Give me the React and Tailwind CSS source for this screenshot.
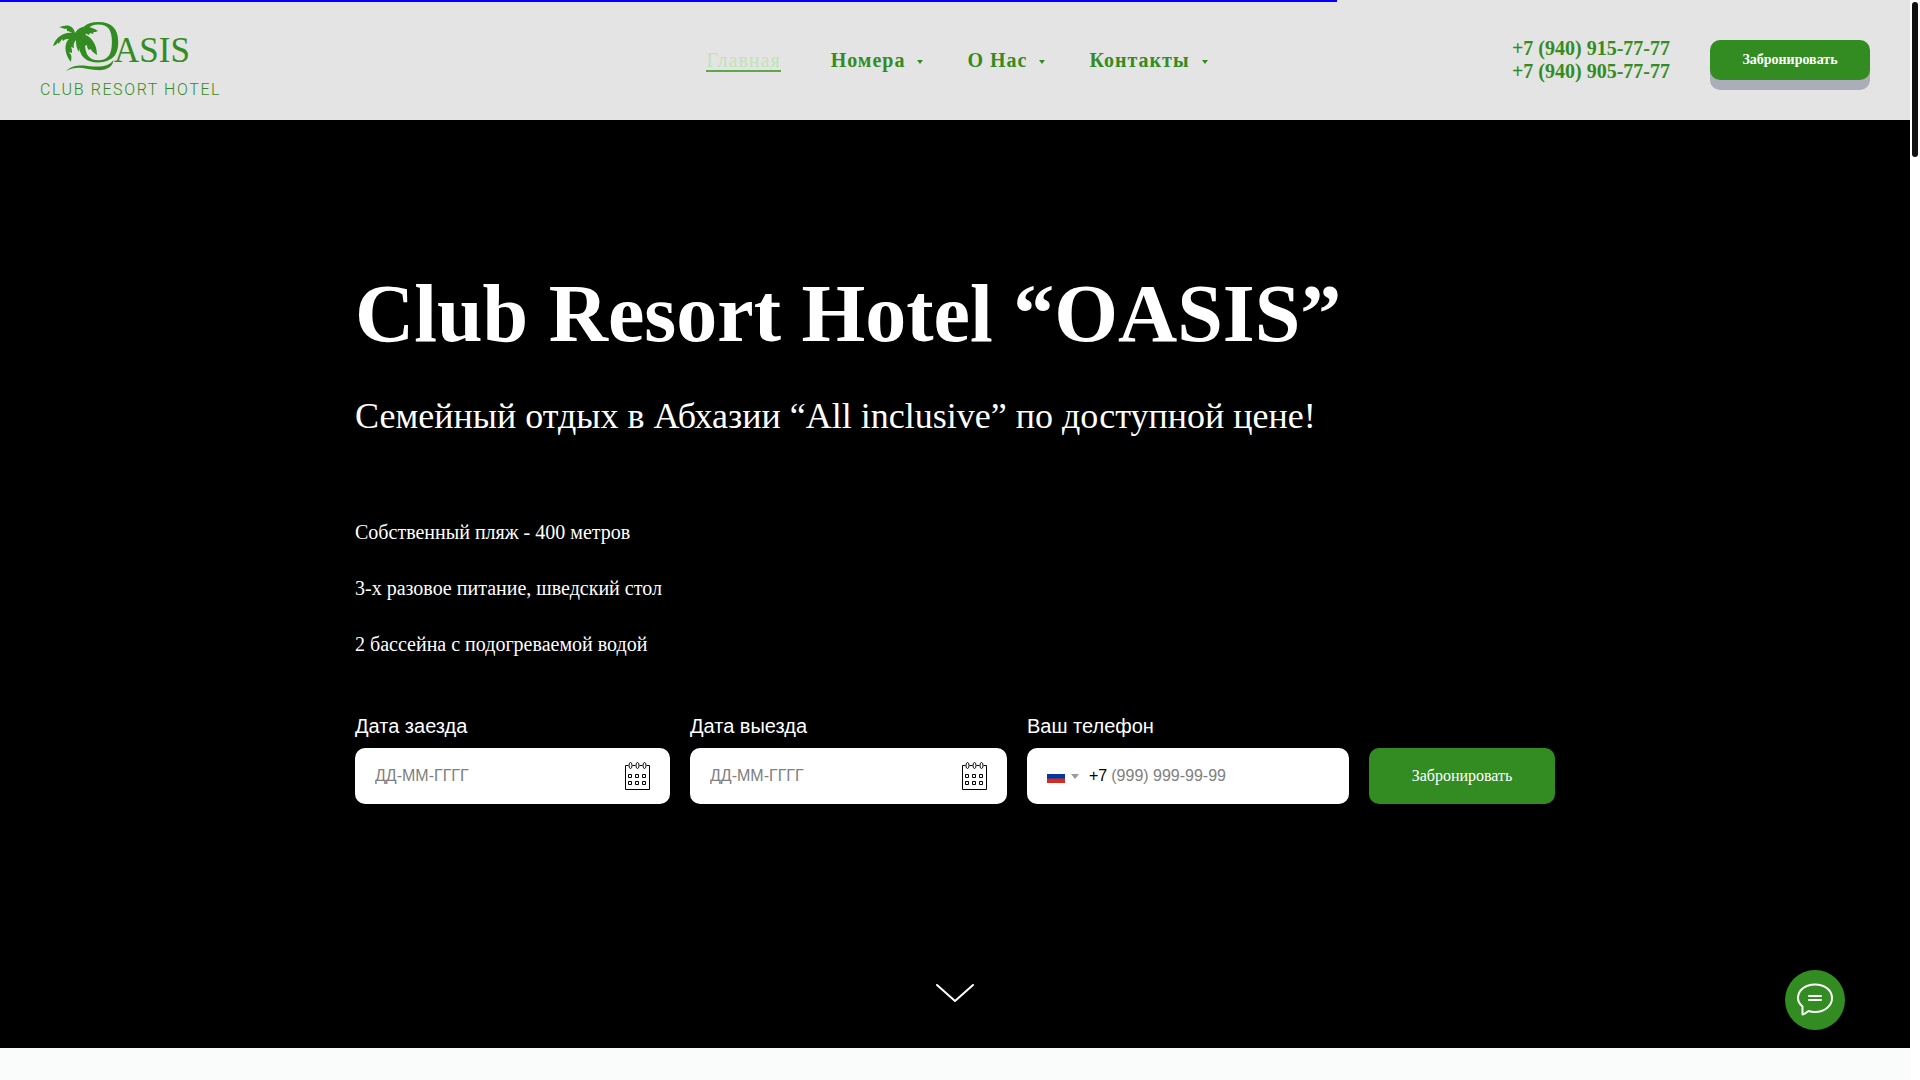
import React, { useState } from 'react'

const menu = [
  { title: 'Номера', href: '#rooms' },
  { title: 'О Нас', href: '#about' },
  { title: 'Контакты', href: '#contacts' },
]

const phones = ['+7 (940) 915-77-77', '+7 (940) 905-77-77']

const features = [
  'Собственный пляж - 400 метров',
  '3-х разовое питание, шведский стол',
  '2 бассейна с подогреваемой водой',
]

function Logo() {
  return (
    <a href="#top" className="flex w-[182px] flex-col items-start self-start pt-1 text-[#338c22]">
      <svg viewBox="40 4 180 72" className="h-[72px] w-[180px]" fill="currentColor">
        <text x="76" y="62" fontFamily="Liberation Serif, serif" fontSize="62">O</text>
        <text x="114" y="62" fontFamily="Liberation Serif, serif" fontSize="35">ASIS</text>
        {/* palm */}
        <path d="M75 33C73 25 67 24 59 27.500c3 0 4 .5 5 1.500l2-.5c1 .5 1 1.500 1 2.500c2 0 4 1 5 2C64 32 56 37 53 46c3-1 4-2 5-4v2c2-2 3-3 4-5l1 2c2-2 4-2 6-2C64 43 64 54 71 62c0-3 1-5 0-7l-2-3c1 0 2 1 3 1c0-2 0-4-1-6l3 1c-1-3 0-6 2-8c0 6 1 9 3 12c1-5 0-9 0-14c4 2 5 5 6 8l2-1c0 3 1 4 2 5l2-1c0 2 3 4 6 6c0-11-6-19-14-21c2-1 4 0 6 1l1-2c2 1 3 1 4 0l-1-1c2 0 3 0 5-1C91 26 80 24 75 33z" />
        {/* wave */}
        <path d="M66 71C75 63 85 66 93 66.500C103 67 109 66 113.500 60C113 67 106 71 96 70C85 69 77 65 66 71z" />
      </svg>
      <span className="mt-1 whitespace-nowrap font-['Roboto',sans-serif] text-base leading-5 font-light tracking-widest">
        CLUB RESORT HOTEL
      </span>
    </a>
  )
}

function CalendarIcon() {
  return (
    <svg viewBox="0 0 25 28" className="h-7 w-[25px]" fill="none" stroke="#000">
      <path d="M3.500 3.500H.5v24h24v-24h-3M7.500 3.500h3M14.500 3.500h3" />
      <ellipse cx="5.500" cy="3.500" rx="1.500" ry="3" />
      <ellipse cx="12.500" cy="3.500" rx="1.500" ry="3" />
      <ellipse cx="19.500" cy="3.500" rx="1.500" ry="3" />
      <path d="M3.500 12.500h3v3h-3zM10.500 12.500h3v3h-3zM17.500 12.500h3v3h-3zM3.500 19.500h3v3h-3zM10.500 19.500h3v3h-3zM17.500 19.500h3v3h-3z" />
    </svg>
  )
}

function DateField({ id, label }) {
  const [value, setValue] = useState('')

  return (
    <div className="min-w-0">
      <label htmlFor={id} className="mb-2 block text-xl leading-7 text-white">{label}</label>
      <div className="flex h-14 items-center rounded-[10px] bg-white px-5">
        <input
          id={id}
          type="text"
          value={value}
          onChange={(e) => setValue(e.target.value)}
          placeholder="ДД-ММ-ГГГГ"
          className="min-w-0 flex-1 text-base text-black outline-none placeholder:text-[#808080]"
        />
        <button type="button" aria-label="Календарь">
          <CalendarIcon />
        </button>
      </div>
    </div>
  )
}

function PhoneField() {
  const [phone, setPhone] = useState('')

  return (
    <div className="min-w-0">
      <label htmlFor="phone" className="mb-2 block text-xl leading-7 text-white">Ваш телефон</label>
      <div className="flex h-14 items-center rounded-[10px] bg-white px-5 text-base">
        <button type="button" aria-label="Страна" className="mr-2.5 flex items-center gap-1.5">
          <svg viewBox="0 0 18 14" className="h-3.5 w-[18px]">
            <path fill="#fff" d="M0 0h18v5H0z" />
            <path fill="#0039a6" d="M0 5h18v5H0z" />
            <path fill="#d52b1e" d="M0 9.500h18V14H0z" />
          </svg>
          <svg viewBox="0 0 8 5" className="h-[5px] w-2">
            <path fill="#999" d="M0 0h8L4 5z" />
          </svg>
        </button>
        <span className="mr-1 text-black">+7</span>
        <input
          id="phone"
          type="tel"
          value={phone}
          onChange={(e) => setPhone(e.target.value)}
          placeholder="(999) 999-99-99"
          className="min-w-0 flex-1 text-black outline-none placeholder:text-[#808080]"
        />
      </div>
    </div>
  )
}

function Header() {
  return (
    <header className="grid min-h-[120px] grid-cols-[1fr_auto_1fr] items-center bg-[#e4e4e4] px-10 text-xl text-[#338c22]">
      <Logo />
      <nav className="flex items-center pl-1 leading-6 tracking-wider">
        <a href="#top" className="mr-[50px] border-b-2 border-[#5ba84d] pt-0.5 leading-5 text-[#bfe3b8]">Главная</a>
        {menu.map((item) => (
          <a key={item.title} href={item.href} className="mr-11 flex items-center gap-3 font-bold last:mr-0">
            {item.title}
            <svg viewBox="0 0 6 4" className="mt-1 h-1 w-1.5" fill="currentColor">
              <path d="M0 0h6L3 4z" />
            </svg>
          </a>
        ))}
      </nav>
      <div className="flex items-center justify-end gap-10">
        <div className="flex flex-col font-bold leading-[23px]">
          {phones.map((phone) => (
            <a key={phone} href={`tel:${phone}`} className="whitespace-nowrap">{phone}</a>
          ))}
        </div>
        <button
          type="button"
          className="h-10 w-40 rounded-[10px] bg-[#338c22] text-sm font-bold text-white shadow-[0_10px_0_#abadb8]"
        >
          Забронировать
        </button>
      </div>
    </header>
  )
}

function Hero() {
  return (
    <section className="flex flex-col items-center bg-black pt-36 pb-[46px] text-white">
      <div className="w-full max-w-[1200px]">
        <h1 className="text-[82px] leading-[100px] font-bold">Club Resort Hotel “OASIS”</h1>
        <p className="mt-[30px] text-4xl leading-[44px]">Семейный отдых в Абхазии “All inclusive” по доступной цене!</p>
        <ul className="mt-20 flex flex-col gap-7 text-xl leading-7">
          {features.map((feature) => (
            <li key={feature}>{feature}</li>
          ))}
        </ul>
        <form
          onSubmit={(e) => e.preventDefault()}
          className="mt-[54px] grid grid-cols-[315fr_317fr_322fr_186fr] items-end gap-5 font-['Liberation_Sans',Arial,sans-serif]"
        >
          <DateField id="arrival" label="Дата заезда" />
          <DateField id="departure" label="Дата выезда" />
          <PhoneField />
          <button
            type="submit"
            className="h-14 rounded-[10px] bg-[#338c22] font-['Liberation_Serif',serif] text-base text-white"
          >
            Забронировать
          </button>
        </form>
      </div>
      <a href="#rooms" aria-label="Вниз" className="mt-[180px]">
        <svg viewBox="0 0 38 18" className="h-[18px] w-[38px]" fill="none" stroke="#fff" strokeWidth="2" strokeLinecap="round" strokeLinejoin="round">
          <path d="M1 1l18 16L37 1" />
        </svg>
      </a>
    </section>
  )
}

export default function App() {
  return (
    <div id="top" className="flex min-h-screen bg-white font-['Liberation_Serif','Times_New_Roman',serif]">
      <main className="relative min-w-0 flex-1 bg-[#fafcfb]">
        {/* Loading progress */}
        <div className="absolute top-0 left-0 h-0.5 w-[70%] bg-[#0000ff]" />
        <Header />
        <Hero />
      </main>

      {/* Scrollbar */}
      <div className="w-2.5 shrink-0 p-0.5">
        <div className="h-[155px] rounded-full bg-[#111]" />
      </div>

      {/* Chat widget */}
      <button
        type="button"
        aria-label="Чат"
        className="fixed right-[75px] bottom-[50px] flex size-[60px] items-center justify-center rounded-full bg-[#338c22]"
      >
        <svg viewBox="0 0 36 34" className="h-[34px] w-9" fill="none" stroke="#fff" strokeWidth="2" strokeLinecap="round" strokeLinejoin="round">
          <path d="M5.500 23.500C2.500 21 1 18 1 15C1 7 8.500 1.500 18 1.500S35 7 35 15S27.500 29 18 29c-2.500 0-4.500-.4-6.500-1C9.500 29.500 8 31 5.500 31.500z" />
          <path d="M12 13h12M12 17h12" />
        </svg>
      </button>
    </div>
  )
}
